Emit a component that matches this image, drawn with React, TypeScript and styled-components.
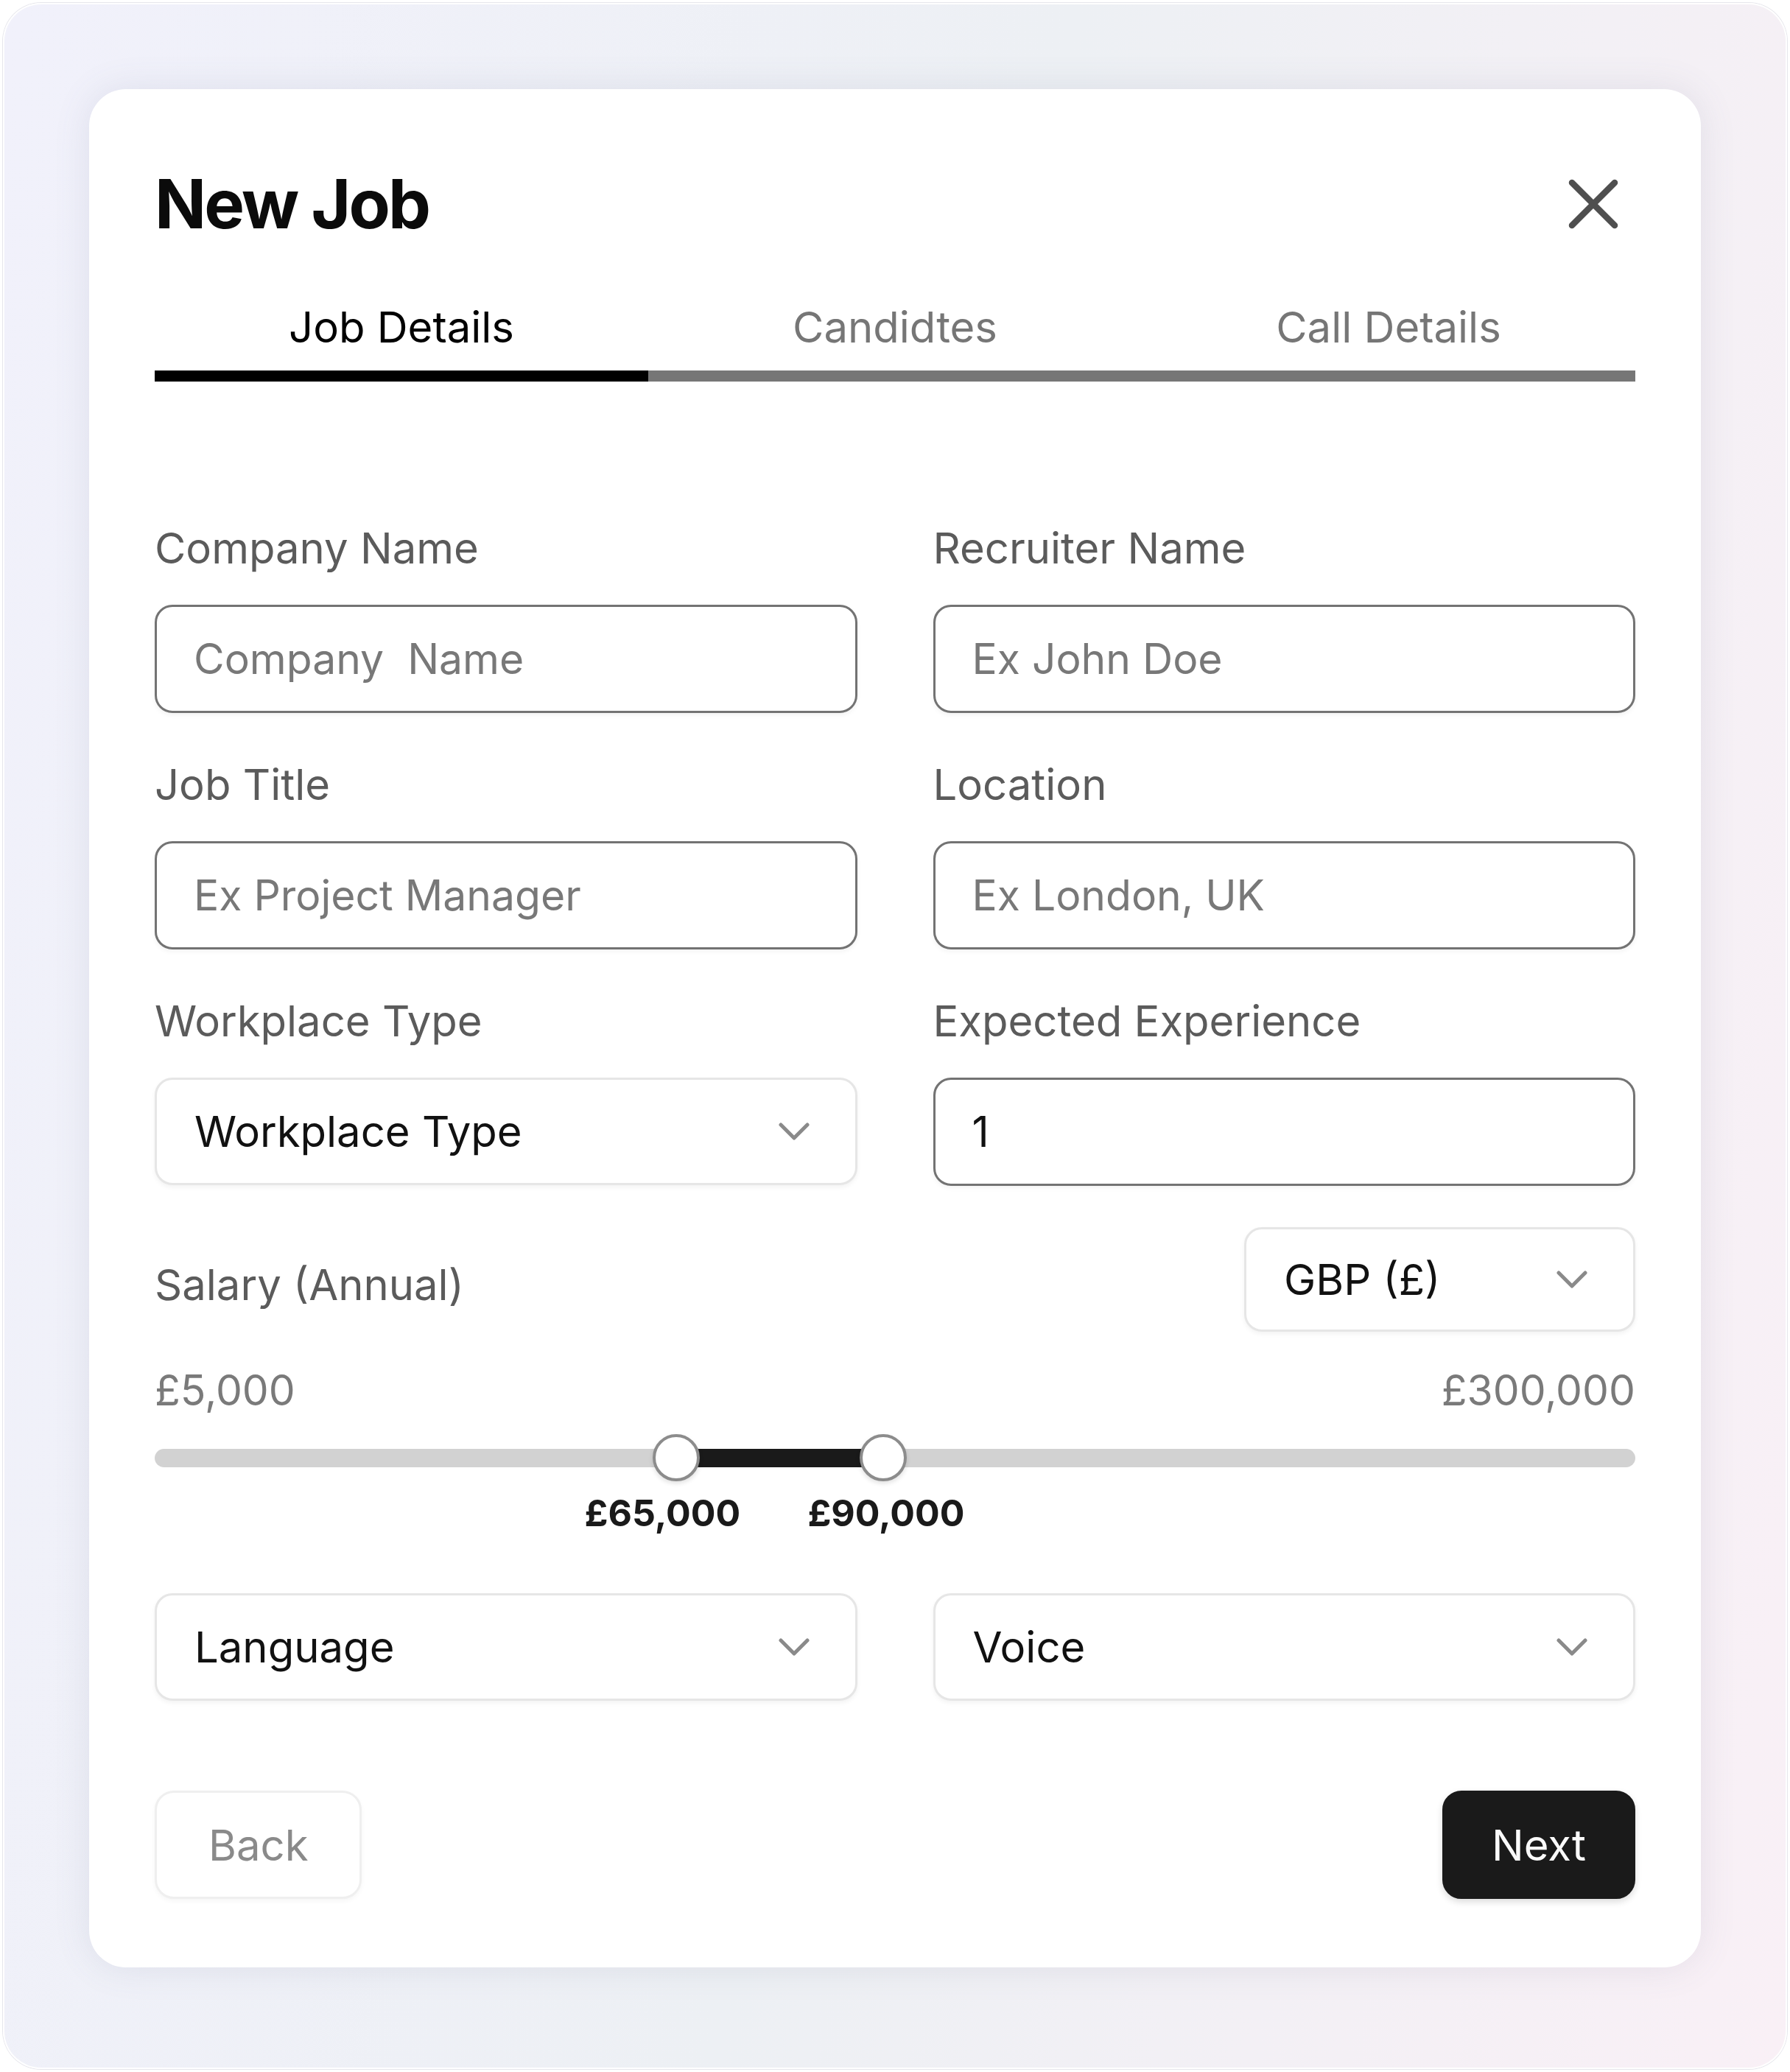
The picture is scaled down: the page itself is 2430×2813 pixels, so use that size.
import styled, { createGlobalStyle } from "styled-components";

const GlobalStyle = createGlobalStyle`
  body {
    margin: 0;
    background: #ffffff;
    font-family: Inter, "Noto Sans", sans-serif;
  }
  * {
    box-sizing: border-box;
  }
`;

const Frame = styled.div`
  margin: 4px;
  width: 2422px;
  height: 2805px;
  padding: 115px;
  border-radius: 52px;
  border: 2px solid rgba(255, 255, 255, 0.9);
  box-shadow: 0 0 0 1px #e6e6ec;
  background: linear-gradient(100deg, #f1f1fb 0%, #edf0f4 50%, #f9f0f6 100%);
`;

const Card = styled.div`
  background: #ffffff;
  border-radius: 50px;
  padding: 100px 89px 93px;
  box-shadow: 0 0 50px rgba(90, 100, 130, 0.12);
`;

const Header = styled.div`
  display: flex;
  justify-content: space-between;
  align-items: center;
`;

const Title = styled.h1`
  margin: 0;
  font-size: 92px;
  font-weight: 700;
  line-height: 111px;
  letter-spacing: -2.8px;
  color: #0b0b0b;
`;

const CloseButton = styled.button`
  border: 0;
  background: none;
  padding: 0;
  margin-right: 22px;
  display: flex;
`;

const Tabs = styled.div`
  display: grid;
  grid-template-columns: repeat(3, 1fr);
  margin-top: 78px;
`;

const Tab = styled.div<{ $active?: boolean }>`
  text-align: center;
  font-size: 58px;
  line-height: 68px;
  padding-bottom: 25px;
  border-bottom: 15px solid ${({ $active }) => ($active ? "#000000" : "#767676")};
  color: ${({ $active }) => ($active ? "#000000" : "#767676")};
`;

const FormGrid = styled.div<{ $top: number }>`
  display: grid;
  grid-template-columns: 1fr 1fr;
  column-gap: 103px;
  row-gap: 62px;
  margin-top: ${({ $top }) => $top}px;
`;

const Field = styled.div`
  display: flex;
  flex-direction: column;
  gap: 42px;
`;

const Label = styled.label`
  font-size: 58px;
  line-height: 70px;
  color: #5b5b5b;
`;

const TextInput = styled.input`
  height: 147px;
  width: 100%;
  border: 3px solid #737373;
  border-radius: 24px;
  padding: 0 50px;
  font-family: inherit;
  font-size: 57px;
  color: #111111;
  background: #ffffff;
  box-shadow: 0 3px 6px rgba(0, 0, 0, 0.05);
  outline: none;

  &::placeholder {
    color: #787878;
  }
`;

const SelectBox = styled.div<{ $width?: number }>`
  display: flex;
  align-items: center;
  justify-content: space-between;
  height: ${({ $width }) => ($width ? 142 : 146)}px;
  width: ${({ $width }) => ($width ? `${$width}px` : "100%")};
  border: 3px solid #e6e6e6;
  border-radius: 24px;
  padding: 0 62px 0 51px;
  font-size: 58px;
  color: #111111;
  background: #ffffff;
  box-shadow: 0 3px 6px rgba(0, 0, 0, 0.05);
`;

const SalaryHeader = styled.div`
  display: flex;
  justify-content: space-between;
  align-items: center;
  margin-top: 56px;
`;

const SalaryLabel = styled(Label)`
  margin-top: 14px;
`;

const RangeEnds = styled.div`
  display: flex;
  justify-content: space-between;
  margin-top: 45px;
  font-size: 57px;
  line-height: 69px;
  color: #7a7a7a;
`;

const Slider = styled.div`
  position: relative;
  height: 64px;
  margin-top: 25px;
`;

const Track = styled.div`
  position: absolute;
  left: 0;
  right: 0;
  top: 20px;
  height: 25px;
  border-radius: 13px;
  background: #d2d2d2;
`;

const Range = styled.div`
  position: absolute;
  top: 20px;
  height: 25px;
  background: #1a1a1a;
`;

const Thumb = styled.div`
  position: absolute;
  top: 0;
  width: 64px;
  height: 64px;
  margin-left: -32px;
  border-radius: 50%;
  background: #ffffff;
  border: 4px solid #8c8c8c;
  box-shadow: 0 3px 6px rgba(0, 0, 0, 0.12);
`;

const ValueRow = styled.div`
  position: relative;
  height: 60px;
  margin-top: 13px;
`;

const Value = styled.span`
  position: absolute;
  top: 0;
  transform: translateX(-50%);
  font-size: 50px;
  font-weight: 700;
  line-height: 60px;
  color: #1a1a1a;
  white-space: nowrap;
`;

const Actions = styled.div`
  display: flex;
  justify-content: space-between;
  margin-top: 122px;
`;

const Button = styled.button<{ $primary?: boolean }>`
  height: 147px;
  padding: 0 ${({ $primary }) => ($primary ? 64 : 70)}px;
  border-radius: 26px;
  font-family: inherit;
  font-size: 58px;
  border: 3px solid ${({ $primary }) => ($primary ? "#1a1a1a" : "#efefef")};
  background: ${({ $primary }) => ($primary ? "#1a1a1a" : "#ffffff")};
  color: ${({ $primary }) => ($primary ? "#fafafa" : "#8a8a8a")};
  box-shadow: ${({ $primary }) =>
    $primary ? "0 4px 10px rgba(0, 0, 0, 0.14)" : "0 3px 6px rgba(0, 0, 0, 0.04)"};
`;

const Chevron = () => (
  <svg width="42" height="24" viewBox="0 0 42 24" fill="none">
    <polyline
      points="3,3 21,21 39,3"
      stroke="#8a8a8a"
      strokeWidth="5"
      strokeLinecap="round"
      strokeLinejoin="round"
    />
  </svg>
);

const CloseIcon = () => (
  <svg width="70" height="70" viewBox="0 0 70 70" fill="none">
    <path
      d="M6 6 L64 64 M64 6 L6 64"
      stroke="#4f4f4f"
      strokeWidth="8.5"
      strokeLinecap="round"
    />
  </svg>
);

const Select = ({ text, width }: { text: string; width?: number }) => (
  <SelectBox $width={width}>
    <span>{text}</span>
    <Chevron />
  </SelectBox>
);

const low = 35.2;
const high = 49.2;

export default function App() {
  return (
    <>
      <GlobalStyle />
      <Frame>
        <Card>
          <Header>
            <Title>New Job</Title>
            <CloseButton aria-label="Close">
              <CloseIcon />
            </CloseButton>
          </Header>

          <Tabs>
            <Tab $active>Job Details</Tab>
            <Tab>Candidtes</Tab>
            <Tab>Call Details</Tab>
          </Tabs>

          <FormGrid $top={191}>
            <Field>
              <Label>Company Name</Label>
              <TextInput placeholder={"Company\u00A0 Name"} />
            </Field>
            <Field>
              <Label>Recruiter Name</Label>
              <TextInput placeholder="Ex John Doe" />
            </Field>
            <Field>
              <Label>Job Title</Label>
              <TextInput placeholder="Ex Project Manager" />
            </Field>
            <Field>
              <Label>Location</Label>
              <TextInput placeholder="Ex London, UK" />
            </Field>
            <Field>
              <Label>Workplace Type</Label>
              <Select text="Workplace Type" />
            </Field>
            <Field>
              <Label>Expected Experience</Label>
              <TextInput defaultValue="1" />
            </Field>
          </FormGrid>

          <SalaryHeader>
            <SalaryLabel>Salary (Annual)</SalaryLabel>
            <Select text="GBP (£)" width={531} />
          </SalaryHeader>

          <RangeEnds>
            <span>£5,000</span>
            <span>£300,000</span>
          </RangeEnds>

          <Slider>
            <Track />
            <Range style={{ left: `${low}%`, width: `${high - low}%` }} />
            <Thumb style={{ left: `${low}%` }} />
            <Thumb style={{ left: `${high}%` }} />
          </Slider>

          <ValueRow>
            <Value style={{ left: "34.3%" }}>£65,000</Value>
            <Value style={{ left: "49.4%" }}>£90,000</Value>
          </ValueRow>

          <FormGrid $top={79}>
            <Select text="Language" />
            <Select text="Voice" />
          </FormGrid>

          <Actions>
            <Button>Back</Button>
            <Button $primary>Next</Button>
          </Actions>
        </Card>
      </Frame>
    </>
  );
}
